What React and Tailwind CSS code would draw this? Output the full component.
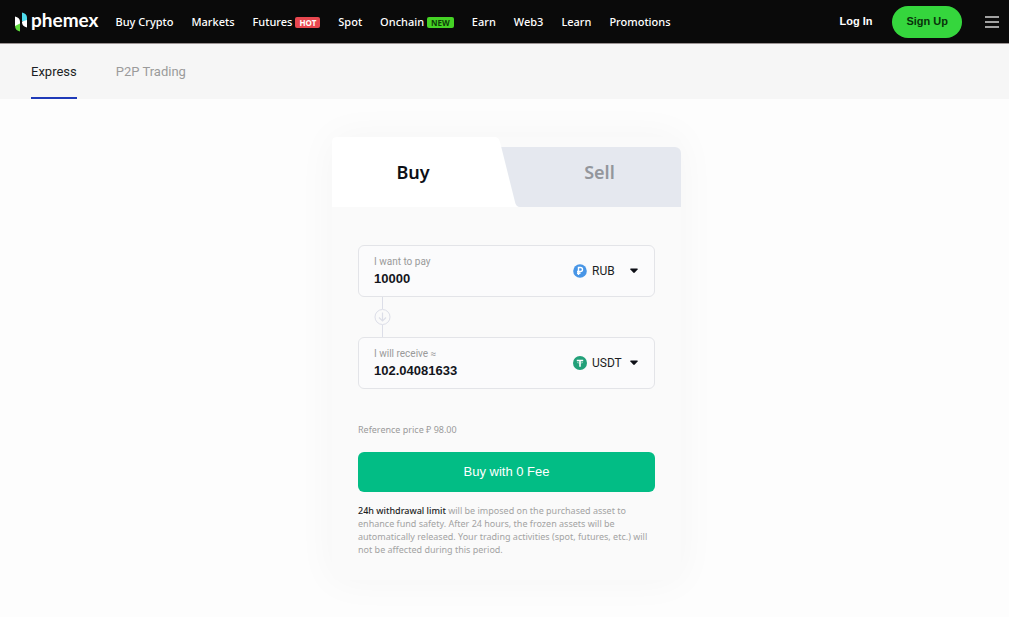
import React, { useState } from 'react';

const NAV_ITEMS = [
  { label: 'Buy Crypto' },
  { label: 'Markets' },
  { label: 'Futures', badge: 'HOT', badgeClass: 'bg-[#e8474f] text-white' },
  { label: 'Spot' },
  { label: 'Onchain', badge: 'NEW', badgeClass: 'bg-[#45d325] text-[#0d3d08]' },
  { label: 'Earn' },
  { label: 'Web3' },
  { label: 'Learn' },
  { label: 'Promotions' },
];

function Logo() {
  return (
    <a href="#" aria-label="Phemex home" className="flex items-center gap-1 text-white">
      <svg viewBox="0 0 12 20" className="w-3 h-5" aria-hidden="true">
        <path d="M0 4.500C3 5 5 7 5 9.500V14H0Z" fill="#fff" />
        <path d="M0 14L5 11.500V19.500C2 19 0 17 0 14Z" fill="#5fdc3c" />
        <path d="M7 0.500C10 1 12 3 12 5.500V9H7Z" fill="#4fdcec" />
        <path d="M7 9.500L12 8V15.500C9 15 7 13 7 10.500Z" fill="#fff" />
      </svg>
      <span className="font-['Lato',sans-serif] text-[19px] leading-5 font-bold pb-1">phemex</span>
    </a>
  );
}

function Header() {
  return (
    <header className="flex items-center h-11 pl-[15px] pr-2.5 bg-[#0a0a0a] border-b border-[#9c9494] text-white">
      <Logo />
      <nav className="flex items-center gap-[18px] ml-[17px] pt-0.5 text-[11px] font-medium">
        {NAV_ITEMS.map((item) => (
          <a key={item.label} href="#" className="flex items-center gap-[3px] whitespace-nowrap">
            {item.label}
            {item.badge && (
              <span className={`rounded-[2px] px-1 text-[8px] leading-[11px] font-bold ${item.badgeClass}`}>
                {item.badge}
              </span>
            )}
          </a>
        ))}
      </nav>
      <div className="flex items-center ml-auto font-['Liberation_Sans',sans-serif] text-[11px] font-bold">
        <a href="#" className="mr-5">Log In</a>
        <button type="button" className="h-8 px-3.5 rounded-full bg-[#35d63d] text-[#08330a] cursor-pointer">
          Sign Up
        </button>
        <button type="button" aria-label="Menu" className="ml-[23px] text-[#d4d4d4] cursor-pointer">
          <svg viewBox="0 0 14 12" className="w-3.5 h-3" stroke="currentColor" strokeWidth="1.500" aria-hidden="true">
            <path d="M0 1H14M0 6H14M0 11H14" />
          </svg>
        </button>
      </div>
    </header>
  );
}

function SubNav() {
  return (
    <nav className="flex h-[55px] px-[31px] gap-[39px] bg-[#f6f6f6] font-['Roboto',sans-serif] text-[13px]">
      <a href="#" aria-current="page" className="flex items-center pt-0.5 border-b-2 border-[#1f3ab8] text-[#1c1e24]">
        Express
      </a>
      <a href="#" className="flex items-center pt-0.5 border-b-2 border-transparent text-[#9b9b9b]">
        P2P Trading
      </a>
    </nav>
  );
}

function Tabs({ side, onChange }) {
  return (
    <div role="tablist" className="flex items-end text-[18px] font-semibold">
      <button
        type="button"
        role="tab"
        aria-selected={side === 'buy'}
        onClick={() => onChange('buy')}
        className="relative z-10 w-[188px] h-[70px] pr-[26px] text-[#0d0f16] cursor-pointer"
      >
        {/* slanted tab background */}
        <svg viewBox="0 0 188 70" className="absolute inset-0 w-full h-full" aria-hidden="true">
          <path d="M0 5Q0 0 5 0H162Q167 0 168 5L183 65Q184 70 188 70H0Z" fill="#fff" />
        </svg>
        <span className="relative">Buy</span>
      </button>
      <button
        type="button"
        role="tab"
        aria-selected={side === 'sell'}
        onClick={() => onChange('sell')}
        className="flex-1 h-[60px] -ml-5 pl-[18px] pb-2.5 rounded-tr-md bg-[#e5e8ef] text-[#93969c] cursor-pointer"
      >
        Sell
      </button>
    </div>
  );
}

function RubIcon() {
  return (
    <svg viewBox="0 0 14 14" className="w-3.5 h-3.5" aria-hidden="true">
      <circle cx="7" cy="7" r="6.800" fill="#4795e6" />
      <path d="M5.500 11V3.500H7.500A2 2 0 0 1 7.500 7.500H4M4 9.300H7.500" fill="none" stroke="#fff" strokeWidth="1.400" />
    </svg>
  );
}

function UsdtIcon() {
  return (
    <svg viewBox="0 0 14 14" className="w-3.5 h-3.5" aria-hidden="true">
      <circle cx="7" cy="7" r="7" fill="#22a079" />
      <path d="M3.800 4.500H10.200M7 4.500V10.800" stroke="#fff" strokeWidth="1.600" />
      <path d="M4 6.500Q7 8 10 6.500" fill="none" stroke="#fff" strokeWidth="0.500" />
    </svg>
  );
}

function AmountField({ id, label, value, onChange, icon, currency, options }) {
  return (
    <div className="flex items-center h-[52px] pl-[15px] pr-3.5 border border-[#e3e4e8] rounded-md bg-[#fbfbfc] font-['Roboto','Noto_Sans',sans-serif]">
      <div className="flex-1 min-w-0">
        <label htmlFor={id} className="block pt-px text-[10px] leading-3 text-[#9a9a9a]">{label}</label>
        <input
          id={id}
          type="text"
          value={value}
          onChange={(e) => onChange(e.target.value)}
          className="block w-full mt-[3px] h-4 bg-transparent font-['Liberation_Sans',sans-serif] text-[13px] font-bold text-[#14161c] outline-none"
        />
      </div>
      <div className="flex items-center gap-[5px] relative w-[67px]">
        {icon}
        <select
          aria-label={`${label} currency`}
          defaultValue={currency}
          className="appearance-none flex-1 bg-transparent text-[12px] text-[#1c1e24] outline-none cursor-pointer"
        >
          {options.map((o) => <option key={o}>{o}</option>)}
        </select>
        <svg viewBox="0 0 10 6" className="absolute right-0.5 w-2 h-1.5 pointer-events-none" aria-hidden="true">
          <path d="M1 0H9Q10 0 9.500 1L6 5Q5 6 4 5L0.500 1Q0 0 1 0Z" fill="#0d0f16" />
        </svg>
      </div>
    </div>
  );
}

// Vertical line with a down arrow joining the two fields
function Connector() {
  return (
    <svg viewBox="0 0 18 40" className="w-[18px] h-10 ml-4" fill="none" stroke="#dcdee8" aria-hidden="true">
      <path d="M8.500 0V12M8.500 28V40" />
      <circle cx="8.500" cy="20" r="7.500" />
      <path d="M8.500 15.500V24M5 20.500L8.500 24L12 20.500" strokeWidth="1.200" />
    </svg>
  );
}

export default function App() {
  const [side, setSide] = useState('buy');
  const [pay, setPay] = useState('10000');
  const [receive, setReceive] = useState('102.04081633');

  return (
    <div className="min-h-screen bg-[#fdfdfd] font-['Noto_Sans',sans-serif]">
      <Header />
      <SubNav />
      <main className="flex justify-center pl-1 pt-[38px] pb-9">
        <section className="w-full max-w-[349px] rounded-md bg-[#fafafa] shadow-[0_0_40px_rgba(0,0,0,0.04)]">
          <Tabs side={side} onChange={setSide} />
          <form className="px-[26px] pt-[38px] pb-6" onSubmit={(e) => e.preventDefault()}>
            <AmountField
              id="pay"
              label="I want to pay"
              value={pay}
              onChange={setPay}
              icon={<RubIcon />}
              currency="RUB"
              options={['RUB', 'USD', 'EUR']}
            />
            <Connector />
            <AmountField
              id="receive"
              label="I will receive ≈"
              value={receive}
              onChange={setReceive}
              icon={<UsdtIcon />}
              currency="USDT"
              options={['USDT', 'BTC', 'ETH']}
            />
            <p className="mt-[34px] text-[9px] leading-[13px] text-[#9a9a9a]">Reference price ₽ 98.00</p>
            <button
              type="submit"
              className="w-full h-10 mt-4 rounded-md bg-[#02bd85] text-white font-['Liberation_Sans',sans-serif] text-[13px] cursor-pointer"
            >
              Buy with 0 Fee
            </button>
            <p className="mt-3 text-[9px] leading-[13px] text-[#a3a3a3]">
              <strong className="font-medium text-[#1c1e24]">24h withdrawal limit</strong> will be imposed on the
              purchased asset to enhance fund safety. After 24 hours, the frozen assets will be automatically released.
              Your trading activities (spot, futures, etc.) will not be affected during this period.
            </p>
          </form>
        </section>
      </main>
    </div>
  );
}
